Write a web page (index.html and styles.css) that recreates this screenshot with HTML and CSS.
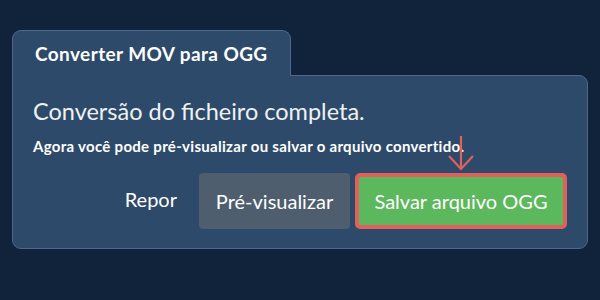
FILE: index.html
```html
<!DOCTYPE html>
<html>
<head>
    <title>Converter MOV para OGG</title>
    <link rel="stylesheet" href="styles.css">
</head>
<body>
    <div class="converter">
        <div class="tab">Converter MOV para OGG</div>
        <div class="panel">
            <h1 class="title">Conversão do ficheiro completa.</h1>
            <p class="subtitle">Agora você pode pré-visualizar ou salvar o arquivo convertido.</p>
            <div class="actions">
                <button class="reset-button">Repor</button>
                <button class="preview-button">Pré-visualizar</button>
                <div class="save-wrap">
                    <svg class="hint-arrow" width="30" height="36" viewBox="0 0 30 36">
                        <path d="M15 1 V34 M3 21 L15 34 L27 21" fill="none" stroke="#e0605c" stroke-width="2.2"/>
                    </svg>
                    <button class="save-button">Salvar arquivo OGG</button>
                </div>
            </div>
        </div>
    </div>
</body>
</html>
```

FILE: styles.css
```css
body {
    margin: 0;
    padding: 30px 12px;
    background-color: #11233a;
    font-family: Lato, "Open Sans", sans-serif;
    color: #fff;
}

.converter {
    width: 576px;
}

.tab {
    position: relative;
    z-index: 1;
    display: inline-block;
    height: 45px;
    line-height: 46px;
    padding: 0 22px;
    margin-bottom: -1px;
    background-color: #2d4a6a;
    border: 1px solid #4d6a8c;
    border-bottom: none;
    border-radius: 9px 9px 0 0;
    font-size: 19px;
    font-weight: bold;
    letter-spacing: 0.4px;
}

.panel {
    background-color: #2d4a6a;
    border: 1px solid #4d6a8c;
    border-radius: 0 9px 9px 9px;
    padding: 20px 20px 19px 20px;
}

.title {
    margin: 0;
    font-size: 23.5px;
    font-weight: normal;
    line-height: 30px;
    color: #eef1f4;
}

.subtitle {
    margin: 11px 0 0 0;
    font-size: 15px;
    font-weight: bold;
    letter-spacing: 0.3px;
    line-height: 18px;
}

.actions {
    display: flex;
    justify-content: flex-end;
    align-items: center;
    margin-top: 18px;
}

.actions button {
    font-family: Lato, "Open Sans", sans-serif;
    font-size: 20px;
    color: #fff;
    cursor: pointer;
}

.reset-button {
    background: none;
    border: none;
    padding: 0 22px 4px 0;
    color: #e6ebf0;
}

.preview-button {
    width: 151px;
    height: 56px;
    background-color: #4f5e6f;
    border: none;
    border-radius: 4px;
    margin-right: 5px;
}

.save-wrap {
    position: relative;
}

.save-button {
    display: block;
    width: 212px;
    height: 56px;
    background-color: #5cb85c;
    border: 4px solid #e0605c;
    border-radius: 5px;
}

.hint-arrow {
    position: absolute;
    left: 91px;
    top: -38px;
}
```
